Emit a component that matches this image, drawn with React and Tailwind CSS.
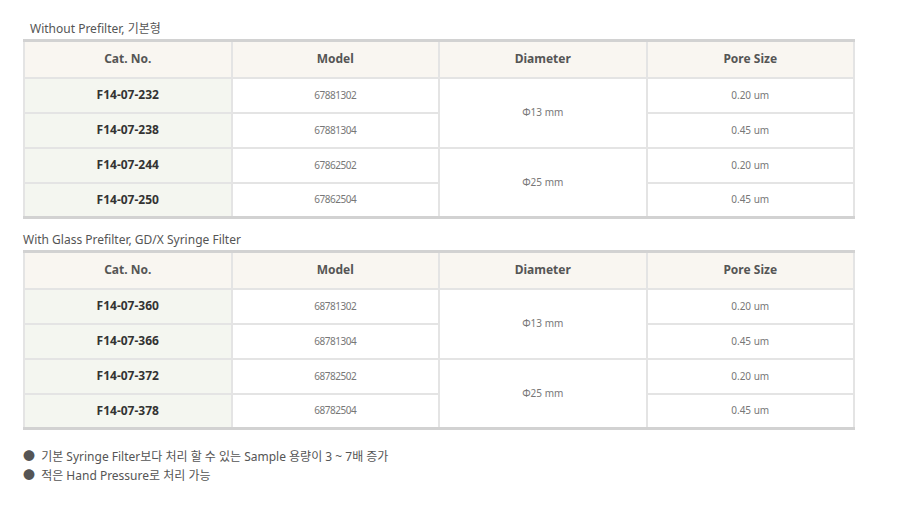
const font = { fontFamily: '"Noto Sans", "Noto Sans CJK KR", sans-serif' };

const tables = [
  {
    caption: "Without Prefilter, 기본형",
    indent: "pl-[7px]",
    rows: [
      ["F14-07-232", "67881302", "0.20 um"],
      ["F14-07-238", "67881304", "0.45 um"],
      ["F14-07-244", "67862502", "0.20 um"],
      ["F14-07-250", "67862504", "0.45 um"],
    ],
  },
  {
    caption: "With Glass Prefilter, GD/X Syringe Filter",
    indent: "",
    rows: [
      ["F14-07-360", "68781302", "0.20 um"],
      ["F14-07-366", "68781304", "0.45 um"],
      ["F14-07-372", "68782502", "0.20 um"],
      ["F14-07-378", "68782504", "0.45 um"],
    ],
  },
];

function SpecTable({ caption, indent, rows }) {
  const th = "h-[37px] border-x-2 border-b-2 border-[#e4e4e4] bg-[#f9f6f1] text-[12px] font-bold text-[#555] text-center";
  const td = "h-[35px] border-2 border-[#e4e4e4] text-center";
  return (
    <div>
      <p className={`text-[12px] text-[#555] leading-[16px] mb-[2px] ${indent}`}>{caption}</p>
      <table className="w-[832px] table-fixed border-collapse border-t-[3px] border-b-[3px] border-t-[#d2d2d2] border-b-[#d2d2d2]">
        <thead>
          <tr>
            <th className={th}>Cat. No.</th>
            <th className={th}>Model</th>
            <th className={th}>Diameter</th>
            <th className={th}>Pore Size</th>
          </tr>
        </thead>
        <tbody>
          {rows.map((r, i) => (
            <tr key={r[0]}>
              <td className={`${td} bg-[#f4f6f0] text-[12px] font-bold text-[#333]`}>{r[0]}</td>
              <td className={`${td} bg-white text-[10px] text-[#777] tracking-[-0.5px]`}>{r[1]}</td>
              {i % 2 === 0 && (
                <td rowSpan={2} className={`${td} bg-white text-[10px] text-[#777]`}>
                  Φ{i === 0 ? "13" : "25"} mm
                </td>
              )}
              <td className={`${td} bg-white text-[10px] text-[#777]`}>{r[2]}</td>
            </tr>
          ))}
        </tbody>
      </table>
    </div>
  );
}

export default function App() {
  return (
    <div className="w-[900px] h-[509px] bg-white pl-[23px] pt-[21px]" style={font}>
      <div className="flex flex-col gap-[13px]">
        {tables.map((t) => (
          <SpecTable key={t.caption} {...t} />
        ))}
      </div>
      <ul className="mt-[17px] text-[12px] text-[#555] leading-[19px]">
        <li>
          <span className="text-[#555] mr-[3px]">●</span> 기본 Syringe Filter보다 처리 할 수 있는 Sample 용량이 3 ~ 7배 증가
        </li>
        <li>
          <span className="text-[#555] mr-[3px]">●</span> 적은 Hand Pressure로 처리 가능
        </li>
      </ul>
    </div>
  );
}
